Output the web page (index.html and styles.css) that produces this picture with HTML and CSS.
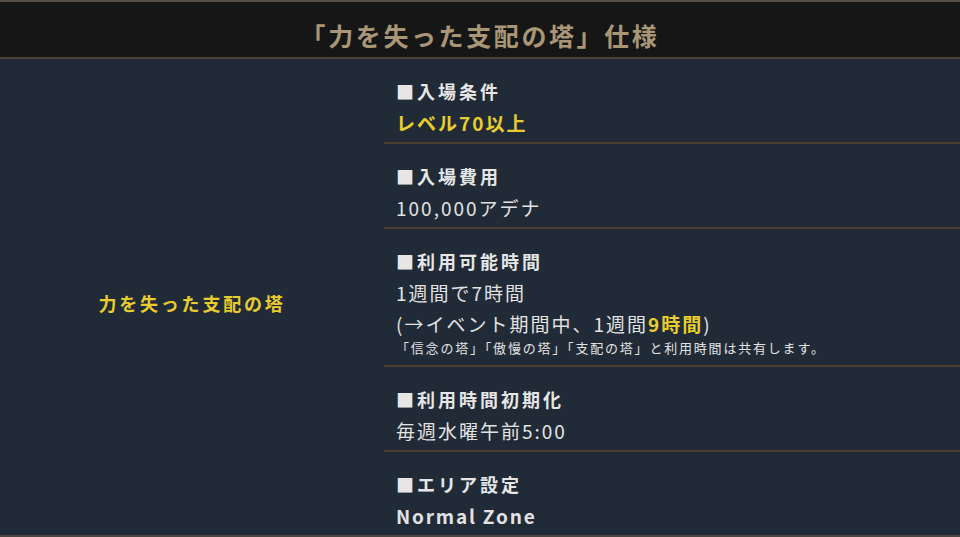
FILE: index.html
```html
<!DOCTYPE html>
<html lang="ja">
<head>
<meta charset="utf-8">
<title>仕様</title>
<link rel="stylesheet" href="styles.css">
</head>
<body>
<div class="page">
  <header class="title">「力を失った支配の塔」仕様</header>
  <section class="spec">
    <div class="name">力を失った支配の塔</div>
    <div class="row">
      <div class="head">■入場条件</div>
      <div class="val hl">レベル70以上</div>
    </div>
    <div class="row">
      <div class="head">■入場費用</div>
      <div class="val">100,000アデナ</div>
    </div>
    <div class="row">
      <div class="head">■利用可能時間</div>
      <div class="val">1週間で7時間</div>
      <div class="val">(→イベント期間中、1週間<span class="hl">9時間</span>)</div>
      <div class="note">「信念の塔」「傲慢の塔」「支配の塔」と利用時間は共有します。</div>
    </div>
    <div class="row">
      <div class="head">■利用時間初期化</div>
      <div class="val">毎週水曜午前5:00</div>
    </div>
    <div class="row">
      <div class="head">■エリア設定</div>
      <div class="val bold">Normal Zone</div>
    </div>
  </section>
</div>
</body>
</html>
```
FILE: styles.css
```css
html, body {
  margin: 0;
  padding: 0;
}
body {
  background: #212b38;
  font-family: "Noto Sans CJK JP", "Noto Sans", sans-serif;
  color: #e4e4e4;
  width: 960px;
  height: 537px;
  overflow: hidden;
}
.page {
  height: 537px;
  display: flex;
  flex-direction: column;
  box-sizing: border-box;
  border-bottom: 2px solid #4a4640;
}
.title {
  background: #171616;
  border-top: 2px solid #57514b;
  border-bottom: 2px solid #4d4236;
  display: flex;
  align-items: center;
  justify-content: center;
  color: #a89676;
  font-weight: bold;
  font-size: 25px;
  letter-spacing: 2.6px;
  padding-top: 12px;
  padding-bottom: 2px;
  height: 41px;
  box-sizing: content-box;
}
.spec {
  flex: 1;
  display: grid;
  grid-template-columns: 384px 1fr;
}
.name {
  grid-column: 1;
  grid-row: 1 / span 5;
  display: flex;
  align-items: center;
  justify-content: center;
  color: #e9cc2e;
  font-weight: bold;
  font-size: 18px;
  letter-spacing: 2.8px;
  padding-top: 12px;
}
.row {
  grid-column: 2;
  padding: 17px 0 3px 12px;
  border-bottom: 2px solid #4e4030;
}
.row:last-child {
  border-bottom: none;
}
.head {
  font-weight: bold;
  font-size: 18px;
  line-height: 31px;
  letter-spacing: 3px;
  color: #e6e6e6;
}
.val {
  font-size: 19px;
  line-height: 31px;
  letter-spacing: 2px;
  color: #e2e2e2;
}
.hl {
  color: #e9cc2e;
  font-weight: bold;
}
.bold {
  font-weight: bold;
  letter-spacing: 1.8px;
}
.note {
  font-size: 13px;
  line-height: 18px;
  letter-spacing: 1.8px;
  margin-bottom: 5px;
  color: #e2e2e2;
}
```
